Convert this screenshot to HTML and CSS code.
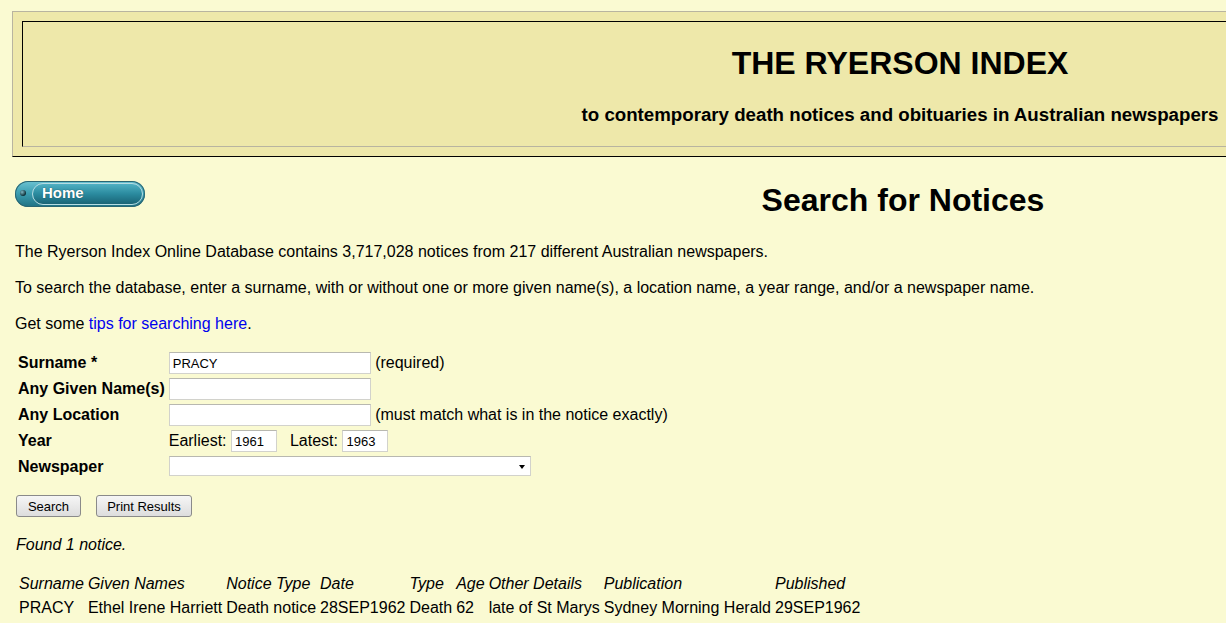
FILE: index.html
```html
<!DOCTYPE html>
<html lang="en">
<head>
<meta charset="utf-8">
<title>The Ryerson Index - Search for Notices</title>
<link rel="stylesheet" href="styles.css">
</head>
<body>
<div class="header">
  <div class="header-inner">
    <h1 class="site-title">THE RYERSON INDEX</h1>
    <h3 class="site-sub">to contemporary death notices and obituaries in Australian newspapers</h3>
  </div>
</div>

<div class="top-row">
  <a class="home-btn" href="#"><span class="home-dot"></span><span class="home-pill">Home</span></a>
  <h1 class="page-title">Search for Notices</h1>
</div>

<p class="para">The Ryerson Index Online Database contains 3,717,028 notices from 217 different Australian newspapers.</p>
<p class="para">To search the database, enter a surname, with or without one or more given name(s), a location name, a year range, and/or a newspaper name.</p>
<p class="para">Get some <a class="link" href="#">tips for searching here</a>.</p>

<form class="search-form">
  <table class="form-table">
    <tr><th>Surname *</th><td><input class="txt" type="text" value="PRACY"> (required)</td></tr>
    <tr><th>Any Given Name(s)</th><td><input class="txt" type="text"></td></tr>
    <tr><th>Any Location</th><td><input class="txt" type="text"> (must match what is in the notice exactly)</td></tr>
    <tr><th>Year</th><td>Earliest: <input class="yr" type="text" value="1961"><span class="yr-gap"></span>Latest: <input class="yr" type="text" value="1963"></td></tr>
    <tr><th>Newspaper</th><td><span class="select"><span class="arrow"></span></span></td></tr>
  </table>
  <div class="buttons">
    <button class="btn btn-search" type="button">Search</button>
    <button class="btn btn-print" type="button">Print Results</button>
  </div>
</form>

<p class="found">Found 1 notice.</p>

<table class="results">
  <tr class="res-head"><td>Surname</td><td>Given Names</td><td>Notice Type</td><td>Date</td><td>Type</td><td>Age</td><td>Other Details</td><td>Publication</td><td>Published</td></tr>
  <tr><td>PRACY</td><td>Ethel Irene Harriett</td><td>Death notice</td><td>28SEP1962</td><td>Death</td><td>62</td><td>late of St Marys</td><td>Sydney Morning Herald</td><td>29SEP1962</td></tr>
</table>
</body>
</html>
```

FILE: styles.css
```css
html, body {
  overflow: hidden;
}
body {
  margin: 0;
  padding: 0;
  background: #fafad2;
  color: #000;
  font-family: "Liberation Sans", Arial, sans-serif;
  font-size: 16px;
}

.header {
  box-sizing: border-box;
  width: 1776px;
  margin: 11px 0 0 12px;
  padding: 9px;
  background: #eee8aa;
  border-top: 1px solid #b8b4a0;
  border-left: 1px solid #b8b4a0;
  border-bottom: 1px solid #000;
  border-right: 1px solid #000;
}
.header-inner {
  box-sizing: border-box;
  height: 126px;
  border-top: 1px solid #000;
  border-left: 1px solid #000;
  border-bottom: 1px solid #b8b4a0;
  border-right: 1px solid #b8b4a0;
  text-align: center;
  padding-top: 23px;
}
.site-title {
  margin: 0;
  font-size: 32px;
  line-height: 37px;
  font-weight: bold;
}
.site-sub {
  margin: 22px 0 0;
  font-size: 18.7px;
  line-height: 22px;
  font-weight: bold;
}

.top-row {
  display: flex;
  align-items: flex-start;
  width: 1646px;
  margin: 24px 0 0 15px;
}
.home-btn {
  position: relative;
  display: block;
  flex: none;
  width: 130px;
  height: 26px;
  border-radius: 13px;
  background: linear-gradient(#6cc3d2 0%, #3d9fb2 45%, #1f7183 100%);
  box-shadow: inset 0 0 0 1px #2a6673;
  text-decoration: none;
}
.home-dot {
  position: absolute;
  left: 5px;
  top: 9px;
  width: 6px;
  height: 6px;
  border-radius: 50%;
  background: radial-gradient(circle at 35% 35%, #7fb8c4, #0b2b33 70%);
}
.home-pill {
  position: absolute;
  left: 17px;
  top: 2px;
  right: 2px;
  bottom: 2px;
  box-sizing: border-box;
  border: 1.5px solid #b6dce2;
  border-radius: 11px;
  background: linear-gradient(#4fb0c2 0%, #2a8a9e 50%, #1a6476 100%);
  color: #fff;
  font-weight: bold;
  font-size: 15px;
  line-height: 18px;
  padding-left: 9px;
  text-shadow: 0 0 1px #0a3640;
}
.page-title {
  flex: 1;
  margin: 1px 0 0;
  text-align: center;
  font-size: 32px;
  line-height: 37px;
  font-weight: bold;
}

.para {
  margin: 23px 0 0 15px;
  line-height: 20px;
}
.para + .para {
  margin-top: 16px;
}
.link {
  color: #0000ee;
  text-decoration: none;
}

.search-form {
  margin: 15px 0 0 15px;
}
.form-table {
  border-collapse: separate;
  border-spacing: 2px;
}
.form-table th {
  text-align: left;
  font-weight: bold;
  padding: 1px;
  white-space: nowrap;
  line-height: 22px;
  vertical-align: middle;
}
.form-table td {
  padding: 1px;
  line-height: 22px;
  vertical-align: middle;
  white-space: nowrap;
}
.txt, .yr {
  box-sizing: border-box;
  height: 22px;
  margin: 0;
  padding: 1px 3px;
  border: 1px solid #d2d2cc;
  border-top-color: #b8b8b0;
  background: #fff;
  font-family: "Liberation Sans", Arial, sans-serif;
  font-size: 13px;
  vertical-align: top;
}
.txt { width: 202px; }
.yr { width: 46px; }
.yr-gap {
  display: inline-block;
  width: 13px;
}
.select {
  position: relative;
  display: inline-block;
  box-sizing: border-box;
  width: 362px;
  height: 20px;
  margin-top: 0;
  vertical-align: top;
  background: #fff;
  border: 1px solid #d2d2cc;
  border-top-color: #b8b8b0;
}
.arrow {
  position: absolute;
  right: 5px;
  top: 8px;
  width: 0;
  height: 0;
  border-left: 3.5px solid transparent;
  border-right: 3.5px solid transparent;
  border-top: 4px solid #000;
}

.buttons {
  display: flex;
  gap: 15px;
  margin: 14px 0 0 1px;
}
.btn {
  box-sizing: border-box;
  height: 22px;
  padding: 0;
  border: 1px solid #8a8a8a;
  border-radius: 3px;
  background: linear-gradient(#f6f6f6, #dddddd);
  font-family: "Liberation Sans", Arial, sans-serif;
  font-size: 13px;
  color: #000;
  text-align: center;
}
.btn-search { width: 65px; }
.btn-print { width: 96px; }

.found {
  margin: 18px 0 0 16px;
  font-style: italic;
  line-height: 20px;
}

.results {
  margin: 16px 0 0 16px;
  border-collapse: separate;
  border-spacing: 2px;
}
.results td {
  padding: 1px;
  line-height: 20px;
  white-space: nowrap;
}
.res-head td {
  font-style: italic;
}
```
